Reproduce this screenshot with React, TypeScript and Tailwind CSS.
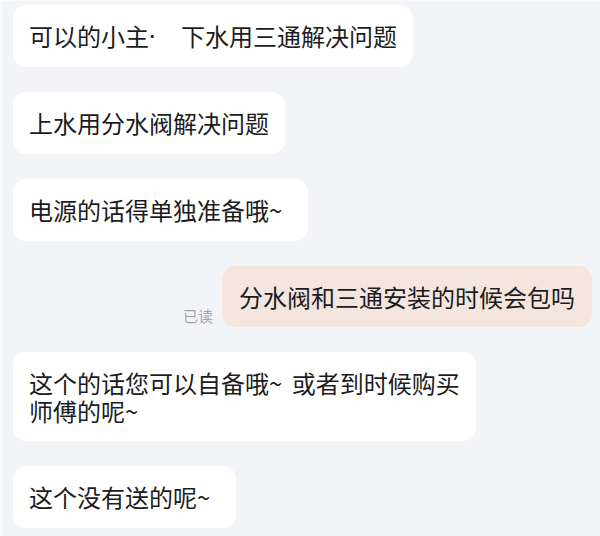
import React from "react";

const font = {
  fontFamily: '"Noto Sans CJK SC", "Noto Sans", sans-serif',
};

function Tilde({ end = true }: { end?: boolean }) {
  return <span className={end ? "mr-[10px]" : "mr-[4px]"}>~</span>;
}

function Left({ children, className = "" }: { children: React.ReactNode; className?: string }) {
  return (
    <div className="flex">
      <div
        className={
          "w-fit rounded-[13px] bg-white px-4 text-[24px] leading-[28px] text-[#1c1c1c] " +
          className
        }
      >
        {children}
      </div>
    </div>
  );
}

export default function App() {
  return (
    <div
      style={font}
      className="w-[600px] h-[536px] overflow-hidden bg-[#f3f4f8] border-l-2 border-t border-[#fafbfc] pl-[11px] pr-[8px] pt-[4px] flex flex-col gap-[25px]"
    >
      <Left className="py-[17px]">
        可以的小主
        <span
          className="inline-block w-[32px] h-[28px] align-top"
          style={{ fontFamily: '"Noto Sans", sans-serif' }}
        >
          ·
        </span>
        下水用三通解决问题
      </Left>
      <Left className="py-[17px]">上水用分水阀解决问题</Left>
      <Left className="py-[17px]">
        电源的话得单独准备哦
        <Tilde />
      </Left>
      <div className="flex justify-end items-end gap-[9px]">
        <span className="mb-[3px] text-[15px] leading-[16px] text-[#a3a3a3]">已读</span>
        <div className="rounded-[13px] bg-[#f5e5df] px-[17px] py-[16.5px] text-[24px] leading-[28px] text-[#1c1c1c]">
          分水阀和三通安装的时候会包吗
        </div>
      </div>
      <Left className="w-[464px] py-[16.5px]">
        这个的话您可以自备哦
        <Tilde end={false} /> 或者到时候购买
        <br />
        师傅的呢
        <Tilde />
      </Left>
      <Left className="py-[17px]">
        这个没有送的呢
        <Tilde />
      </Left>
    </div>
  );
}
